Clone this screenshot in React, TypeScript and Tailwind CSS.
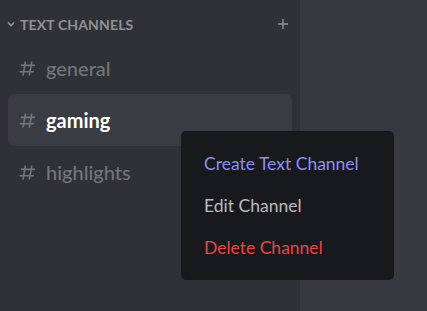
const channels = [
  { name: 'general', active: false },
  { name: 'gaming', active: true },
  { name: 'highlights', active: false },
];

const Hash = ({ className }: { className?: string }) => (
  <svg className={className} viewBox="0 0 24 24" fill="currentColor">
    <path
      fillRule="evenodd"
      d="M5.88657 21C5.57547 21 5.3399 20.7189 5.39427 20.4126L6.00001 17H2.59511C2.28449 17 2.04905 16.7198 2.10259 16.4138L2.27759 15.4138C2.31946 15.1746 2.52722 15 2.77011 15H6.35001L7.41001 9H4.00511C3.69449 9 3.45905 8.71977 3.51259 8.41381L3.68759 7.41381C3.72946 7.17456 3.93722 7 4.18011 7H7.76001L8.39677 3.41262C8.43914 3.17391 8.64664 3 8.88907 3H9.87344C10.1845 3 10.4201 3.28107 10.3657 3.58738L9.76001 7H15.76L16.3968 3.41262C16.4391 3.17391 16.6466 3 16.8891 3H17.8734C18.1845 3 18.4201 3.28107 18.3657 3.58738L17.76 7H21.1649C21.4755 7 21.711 7.28023 21.6574 7.58619L21.4824 8.58619C21.4406 8.82544 21.2328 9 20.9899 9H17.41L16.35 15H19.7549C20.0655 15 20.301 15.2802 20.2474 15.5862L20.0724 16.5862C20.0306 16.8254 19.8228 17 19.5799 17H16L15.3632 20.5874C15.3209 20.8261 15.1134 21 14.8709 21H13.8866C13.5755 21 13.3399 20.7189 13.3943 20.4126L14 17H8.00001L7.36325 20.5874C7.32088 20.8261 7.11337 21 6.87094 21H5.88657ZM9.41045 9L8.35045 15H14.3504L15.4104 9H9.41045Z"
    />
  </svg>
);

export default function App() {
  return (
    <div className="relative flex h-[311px] w-[427px] overflow-hidden font-['Lato','Noto_Sans',sans-serif]">
      {/* Channel sidebar */}
      <div className="w-[300px] bg-[#2f3136] px-2">
        <div className="flex h-[42px] items-center pt-[6px] pr-[4px] text-[#8e9297]">
          <svg className="-ml-[3px] h-3 w-3" viewBox="0 0 24 24" fill="none" stroke="currentColor" strokeWidth={3.5}>
            <path d="M6 9l6 6 6-6" />
          </svg>
          <span className="ml-[3px] text-[14px] font-bold tracking-[0.01em]">TEXT CHANNELS</span>
          <svg className="ml-auto h-[10px] w-[10px]" viewBox="0 0 10 10" stroke="currentColor" strokeWidth={1.4}>
            <path d="M5 0v10M0 5h10" />
          </svg>
        </div>
        <div className="flex flex-col">
          {channels.map((c) => (
            <div
              key={c.name}
              className={`flex h-[52px] items-center rounded-md px-[10px] ${c.active ? 'bg-[#393c43] text-white' : 'text-[#72767d]'}`}
            >
              <Hash className="h-[19px] w-[19px] text-[#72767d]" />
              <span className={`ml-[9px] text-[20px] ${c.active ? 'font-bold' : 'font-medium'}`}>{c.name}</span>
            </div>
          ))}
        </div>
      </div>

      {/* Main area */}
      <div className="flex-1 bg-[#36393f]" />

      {/* Context menu */}
      <div className="absolute left-[181px] top-[131px] flex h-[149px] w-[213px] flex-col justify-center gap-[18px] rounded-[5px] bg-[#18191c] px-[23px] text-[17.5px] leading-[24px]">
        <span className="text-[#8a8ff2]">Create Text Channel</span>
        <span className="text-[#b9bbbe]">Edit Channel</span>
        <span className="text-[#ed4245]">Delete Channel</span>
      </div>
    </div>
  );
}
